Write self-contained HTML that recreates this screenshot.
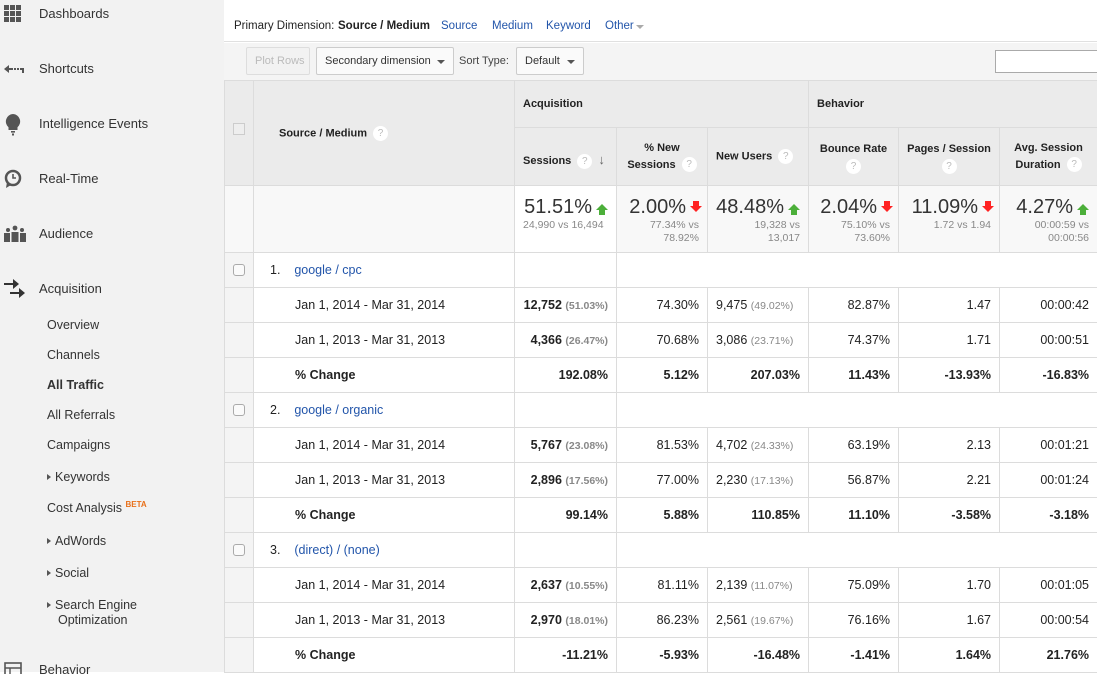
<!DOCTYPE html>
<html><head><meta charset="utf-8"><style>
*{box-sizing:border-box;margin:0;padding:0}
body{width:1097px;height:672px;overflow:hidden;font-family:"Liberation Sans",Arial,sans-serif;background:#fff;position:relative;color:#222}
#side{position:absolute;left:0;top:0;width:224px;height:672px;background:#f2f2f2}
.nav{position:absolute;left:39px;font-size:13px;color:#333}
.ic{position:absolute;left:4px}
.sub{position:absolute;left:47px;font-size:12.5px;color:#333}
.tri{display:inline-block;width:0;height:0;border-left:4px solid #555;border-top:3.5px solid transparent;border-bottom:3.5px solid transparent;margin-right:4px;vertical-align:1px}
#pd{position:absolute;left:224px;top:0;width:873px;height:42px;border-bottom:1px solid #e0e0e0;font-size:11.5px}
#pd span{position:absolute;top:20px}
.lk{color:#2255aa}
#tb{position:absolute;left:224px;top:43px;width:873px;height:37px;background:#f4f4f4;font-size:11px}
.btn{position:absolute;top:4px;height:28px;border:1px solid #ccc;border-radius:2px;background:#f6f6f6;line-height:26px;padding-left:8px;color:#333}
.dd{display:inline-block;width:0;height:0;border-top:4px solid #555;border-left:4px solid transparent;border-right:4px solid transparent;position:absolute;right:8px;top:12px}
table{position:absolute;left:224px;top:80px;border-collapse:collapse;table-layout:fixed;width:873px;font-size:12.5px}
td{border:1px solid #dcdcdc;padding:0 8px;white-space:nowrap}
.h td{background:#ebebeb;font-size:11px;font-weight:bold;color:#222}
.q{display:inline-block;width:15px;height:15px;border-radius:50%;background:#fff;color:#bbb;font-size:10px;font-weight:normal;text-align:center;line-height:15px;vertical-align:middle;margin-left:6px}
.cb{background:#f4f4f4;padding:0}
.box{display:block;margin:0 auto;width:12px;height:12px;border:1px solid #aaa;border-radius:3px;background:#fafafa}
.r{text-align:right}
.g{color:#888;font-size:10.5px;font-weight:bold}
.g2{color:#888;font-size:10.5px}
.sum td{background:#f8f8f8;text-align:right;vertical-align:top;padding-top:10px}
.big{font-size:20px;color:#333}
.small{font-size:10.5px;color:#888;line-height:13px}
.up{display:inline-block;width:0;height:0;border-bottom:6px solid #4caf3a;border-left:6px solid transparent;border-right:6px solid transparent;margin-left:4px;vertical-align:3px;position:relative}
.up:after{content:"";position:absolute;left:-3px;top:6px;width:6px;height:5px;background:#4caf3a}
.dn{display:inline-block;width:6px;height:5px;background:#f22;margin-left:7px;vertical-align:7px;position:relative}
.dn:after{content:"";position:absolute;left:-3px;top:5px;border-top:6px solid #f22;border-left:6px solid transparent;border-right:6px solid transparent}
tr.d td{height:35px}
b{font-weight:bold}
</style></head><body>
<div id="side">
<svg class="ic" style="top:5px;left:4px" width="18" height="18"><g fill="#555"><rect x="0" y="0" width="5" height="5"/><rect x="6" y="0" width="5" height="5"/><rect x="12" y="0" width="5" height="5"/><rect x="0" y="6" width="5" height="5"/><rect x="6" y="6" width="5" height="5"/><rect x="12" y="6" width="5" height="5"/><rect x="0" y="12" width="5" height="5"/><rect x="6" y="12" width="5" height="5"/><rect x="12" y="12" width="5" height="5"/></g></svg>
<div class="nav" style="top:6px">Dashboards</div>
<svg class="ic" style="top:64px" width="22" height="10"><path d="M0 5 L5 1 L5 9Z M5 4h4v2H5z M10 4h2v2h-2z M13 4h2v2h-2z M16 4h4v5h-2V6h-2z" fill="#555"/></svg>
<div class="nav" style="top:61px">Shortcuts</div>
<svg class="ic" style="top:113px" width="20" height="24"><path d="M9 1a7.5 7.5 0 0 0-4.5 13.2V17h9v-2.8A7.5 7.5 0 0 0 9 1z" fill="#555"/><rect x="7" y="18" width="4" height="1.6" fill="#555"/><rect x="8" y="20.5" width="2" height="2" fill="#555"/></svg>
<div class="nav" style="top:116px">Intelligence Events</div>
<svg class="ic" style="top:169px" width="20" height="20"><circle cx="9" cy="9" r="7" fill="none" stroke="#555" stroke-width="2.5"/><path d="M9 5v4h3" fill="none" stroke="#555" stroke-width="1.6"/><path d="M3 13 L2 19 L7 16Z" fill="#555"/></svg>
<div class="nav" style="top:171px">Real-Time</div>
<svg class="ic" style="top:225px" width="22" height="18"><g fill="#555"><circle cx="4" cy="5" r="2"/><circle cx="11" cy="3" r="2.4"/><circle cx="18" cy="5" r="2"/><rect x="0" y="8" width="6" height="9"/><rect x="7.5" y="7" width="7" height="10"/><rect x="16" y="8" width="6" height="9"/></g></svg>
<div class="nav" style="top:226px">Audience</div>
<svg class="ic" style="top:278px" width="22" height="22"><path d="M0 5h9V1l6 5-6 5V7H0z M6 14h9v-4l6 5-6 5v-4H6z" fill="#333"/></svg>
<div class="nav" style="top:281px">Acquisition</div>
<div class="sub" style="top:318px">Overview</div>
<div class="sub" style="top:348px">Channels</div>
<div class="sub" style="top:378px"><b>All Traffic</b></div>
<div class="sub" style="top:408px">All Referrals</div>
<div class="sub" style="top:438px">Campaigns</div>
<div class="sub" style="top:470px"><span class="tri"></span>Keywords</div>
<div class="sub" style="top:500px">Cost Analysis <sup style="color:#e8701a;font-size:8px;font-weight:bold">BETA</sup></div>
<div class="sub" style="top:534px"><span class="tri"></span>AdWords</div>
<div class="sub" style="top:566px"><span class="tri"></span>Social</div>
<div class="sub" style="top:598px;line-height:15px"><span class="tri"></span>Search Engine<br><span style="padding-left:11px">Optimization</span></div>
<svg class="ic" style="top:662px" width="20" height="12"><rect x="1" y="1" width="16" height="14" fill="none" stroke="#555" stroke-width="1.6"/><path d="M1 6h16M6 6v9" stroke="#555" stroke-width="1.4"/></svg>
<div class="nav" style="top:662px">Behavior</div>
</div>

<div id="pd">
<span style="left:10px">Primary Dimension:</span>
<span style="left:114px;font-weight:bold">Source / Medium</span>
<span class="lk" style="left:217px">Source</span>
<span class="lk" style="left:268px">Medium</span>
<span class="lk" style="left:322px">Keyword</span>
<span class="lk" style="left:381px">Other</span>
<span style="left:412px;top:25px;width:0;height:0;border-top:4px solid #aaa;border-left:4px solid transparent;border-right:4px solid transparent"></span>
</div>
<div id="tb">
<div class="btn" style="left:22px;width:64px;color:#bbb;background:#f2f2f2;border-color:#ddd">Plot Rows</div>
<div class="btn" style="left:92px;width:138px;background:#fafafa">Secondary dimension<span class="dd"></span></div>
<span style="position:absolute;left:235px;top:12px;color:#444">Sort Type:</span>
<div class="btn" style="left:292px;width:68px;background:#fafafa">Default<span class="dd"></span></div>
<div style="position:absolute;left:771px;top:7px;width:110px;height:23px;border:1px solid #aaa;background:#fff"></div>
</div>

<table>
<colgroup><col style="width:29px"><col style="width:261px"><col style="width:102px"><col style="width:91px"><col style="width:101px"><col style="width:90px"><col style="width:101px"><col style="width:98px"></colgroup>
<tr class="h" style="height:47px"><td class="cb" rowspan="2" style="background:#ebebeb"><span class="box" style="border-radius:0;border-color:#ccc;background:#eee;margin-top:-8px"></span></td><td rowspan="2" style="padding-left:25px">Source / Medium<span class="q">?</span></td><td colspan="3">Acquisition</td><td colspan="3">Behavior</td></tr>
<tr class="h" style="height:58px"><td style="padding-top:8px">Sessions<span class="q">?</span> <span style="color:#666;font-size:13px;margin-left:3px">↓</span></td><td style="text-align:center;line-height:17px">% New<br>Sessions<span class="q">?</span></td><td>New Users<span class="q">?</span></td><td style="text-align:center;line-height:17px;vertical-align:top;padding-top:13px">Bounce Rate<br><span class="q" style="margin:0">?</span></td><td style="text-align:center;line-height:17px;vertical-align:top;padding-top:13px">Pages / Session<br><span class="q" style="margin:0">?</span></td><td style="text-align:center;line-height:17px">Avg. Session<br>Duration<span class="q">?</span></td></tr>
<tr class="sum" style="height:67px"><td class="cb"></td><td></td><td style="background:#fff"><span class="big">51.51%</span><span class="up"></span><div class="small" style="text-align:left">24,990 vs 16,494</div></td><td><span class="big">2.00%</span><span class="dn"></span><div class="small">77.34% vs<br>78.92%</div></td><td><span class="big">48.48%</span><span class="up"></span><div class="small">19,328 vs<br>13,017</div></td><td><span class="big">2.04%</span><span class="dn"></span><div class="small">75.10% vs<br>73.60%</div></td><td><span class="big">11.09%</span><span class="dn"></span><div class="small">1.72 vs 1.94</div></td><td><span class="big">4.27%</span><span class="up"></span><div class="small">00:00:59 vs<br>00:00:56</div></td></tr>

<tr class="d"><td class="cb"><span class="box"></span></td><td style="padding-left:16px">1.&nbsp;&nbsp;&nbsp;&nbsp;<span class="lk">google / cpc</span></td><td></td><td colspan="5"></td></tr>
<tr class="d"><td class="cb"></td><td style="padding-left:41px">Jan 1, 2014 - Mar 31, 2014</td><td class="r"><b>12,752</b> <span class="g">(51.03%)</span></td><td class="r">74.30%</td><td class="r" style="text-align:left">9,475 <span class="g2">(49.02%)</span></td><td class="r">82.87%</td><td class="r">1.47</td><td class="r">00:00:42</td></tr>
<tr class="d"><td class="cb"></td><td style="padding-left:41px">Jan 1, 2013 - Mar 31, 2013</td><td class="r"><b>4,366</b> <span class="g">(26.47%)</span></td><td class="r">70.68%</td><td class="r" style="text-align:left">3,086 <span class="g2">(23.71%)</span></td><td class="r">74.37%</td><td class="r">1.71</td><td class="r">00:00:51</td></tr>
<tr class="d" style="font-weight:bold"><td class="cb"></td><td style="padding-left:41px">% Change</td><td class="r">192.08%</td><td class="r">5.12%</td><td class="r">207.03%</td><td class="r">11.43%</td><td class="r">-13.93%</td><td class="r">-16.83%</td></tr>

<tr class="d"><td class="cb"><span class="box"></span></td><td style="padding-left:16px">2.&nbsp;&nbsp;&nbsp;&nbsp;<span class="lk">google / organic</span></td><td></td><td colspan="5"></td></tr>
<tr class="d"><td class="cb"></td><td style="padding-left:41px">Jan 1, 2014 - Mar 31, 2014</td><td class="r"><b>5,767</b> <span class="g">(23.08%)</span></td><td class="r">81.53%</td><td class="r" style="text-align:left">4,702 <span class="g2">(24.33%)</span></td><td class="r">63.19%</td><td class="r">2.13</td><td class="r">00:01:21</td></tr>
<tr class="d"><td class="cb"></td><td style="padding-left:41px">Jan 1, 2013 - Mar 31, 2013</td><td class="r"><b>2,896</b> <span class="g">(17.56%)</span></td><td class="r">77.00%</td><td class="r" style="text-align:left">2,230 <span class="g2">(17.13%)</span></td><td class="r">56.87%</td><td class="r">2.21</td><td class="r">00:01:24</td></tr>
<tr class="d" style="font-weight:bold"><td class="cb"></td><td style="padding-left:41px">% Change</td><td class="r">99.14%</td><td class="r">5.88%</td><td class="r">110.85%</td><td class="r">11.10%</td><td class="r">-3.58%</td><td class="r">-3.18%</td></tr>

<tr class="d"><td class="cb"><span class="box"></span></td><td style="padding-left:16px">3.&nbsp;&nbsp;&nbsp;&nbsp;<span class="lk">(direct) / (none)</span></td><td></td><td colspan="5"></td></tr>
<tr class="d"><td class="cb"></td><td style="padding-left:41px">Jan 1, 2014 - Mar 31, 2014</td><td class="r"><b>2,637</b> <span class="g">(10.55%)</span></td><td class="r">81.11%</td><td class="r" style="text-align:left">2,139 <span class="g2">(11.07%)</span></td><td class="r">75.09%</td><td class="r">1.70</td><td class="r">00:01:05</td></tr>
<tr class="d"><td class="cb"></td><td style="padding-left:41px">Jan 1, 2013 - Mar 31, 2013</td><td class="r"><b>2,970</b> <span class="g">(18.01%)</span></td><td class="r">86.23%</td><td class="r" style="text-align:left">2,561 <span class="g2">(19.67%)</span></td><td class="r">76.16%</td><td class="r">1.67</td><td class="r">00:00:54</td></tr>
<tr class="d" style="font-weight:bold"><td class="cb"></td><td style="padding-left:41px">% Change</td><td class="r">-11.21%</td><td class="r">-5.93%</td><td class="r">-16.48%</td><td class="r">-1.41%</td><td class="r">1.64%</td><td class="r">21.76%</td></tr>
</table>
</body></html>
